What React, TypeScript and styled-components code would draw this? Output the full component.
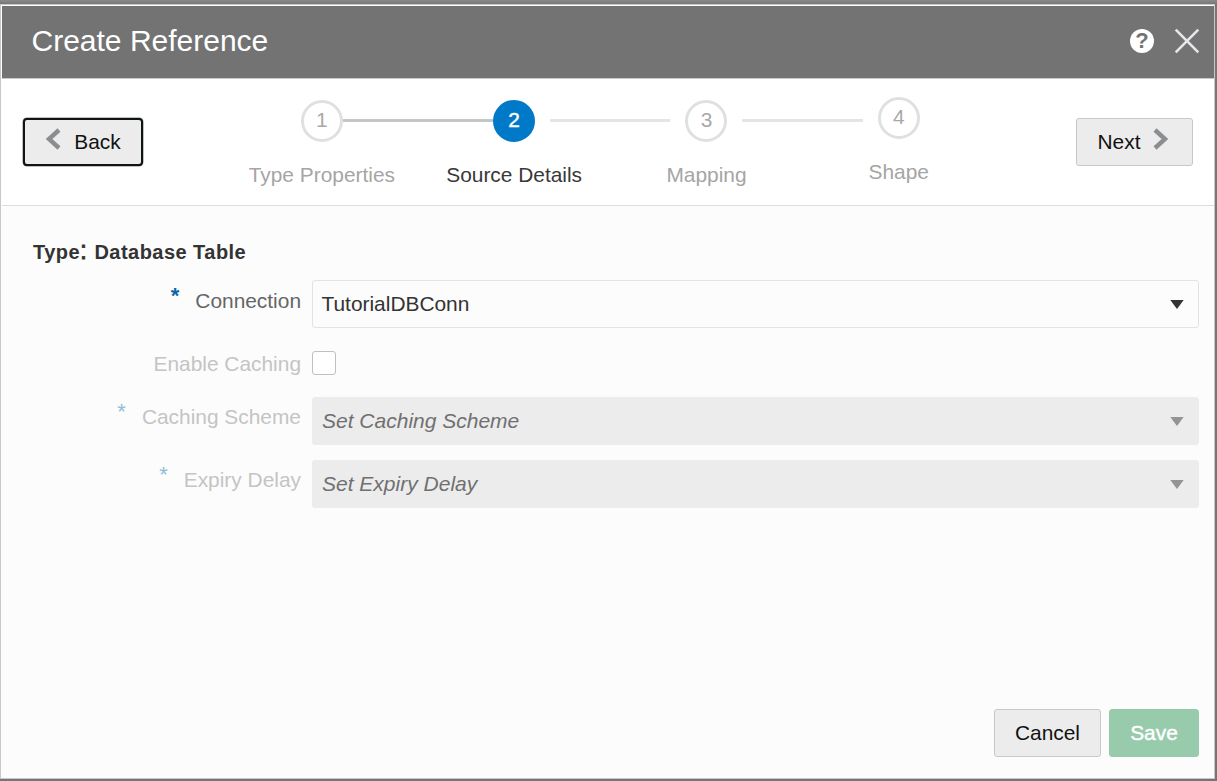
import React from "react";
import styled, { createGlobalStyle, css } from "styled-components";

const GlobalStyle = createGlobalStyle`
  * { box-sizing: border-box; }
  body {
    margin: 0;
    background: #757575;
    font-family: "Liberation Sans", Arial, sans-serif;
    font-size: 20.9px;
    line-height: 24px;
    color: #333;
  }
`;

const Backdrop = styled.div`
  width: 1217px;
  height: 781px;
  padding: 4px 2px 2px 0;
  overflow: hidden;
  background: linear-gradient(#8a8a8a 0, #777 4px, #757575 100%);
`;

const Dialog = styled.section`
  width: 1215px;
  height: 775px;
  display: flex;
  flex-direction: column;
  border: 1px solid #c8c8c8;
  background: #fcfcfc;
`;

const Header = styled.header`
  height: 74px;
  flex: none;
  display: flex;
  align-items: center;
  padding: 0 14px 2px 29.5px;
  background: #737373;
  border: solid #fff;
  border-width: 1px 0 0 1px;
  border-bottom: 1px solid #c8cacb;
`;

const Title = styled.h1`
  margin: 0;
  flex: 1;
  font-size: 30px;
  line-height: 36px;
  font-weight: 400;
  color: #fff;
`;

const CloseIcon = styled.svg`
  width: 26px;
  height: 26px;
  margin-left: 20px;
  display: block;
`;

const HelpBadge = styled.span`
  width: 24px;
  height: 24px;
  display: grid;
  place-items: center;
  border-radius: 50%;
  background: #fff;
  color: #737373;
  font: 700 22px/24px "Liberation Sans", Arial, sans-serif;
`;

const TrainBar = styled.nav`
  height: 127px;
  flex: none;
  display: flex;
  justify-content: space-between;
  align-items: flex-start;
  margin-left: 1px;
  padding: 0 21px;
  background: #fff;
  border-bottom: 1px solid #d8dfe4;
`;

const Button = styled.button<{ $w: number; $kind?: "focus" | "primary" }>`
  width: ${(p) => p.$w}px;
  height: 48px;
  padding: 0;
  display: flex;
  align-items: center;
  justify-content: center;
  font: inherit;
  color: #111;
  background: #ececec;
  border: 1px solid #c6c8ca;
  border-radius: 3px;
  ${(p) =>
    p.$kind === "focus" &&
    css`
      border: 2px solid #101414;
      border-radius: 4px;
      box-shadow: 0 0 0 0.5px #7d857d;
    `}
  ${(p) =>
    p.$kind === "primary" &&
    css`
      color: #fff;
      background: #98cbac;
      border-color: #98cbac;
      -webkit-text-stroke: 0.4px #fff;
    `}
`;

const NavSlot = styled.div`
  margin-top: 39px;
`;

const Chevron = styled.svg<{ $side: "left" | "right" }>`
  width: 16px;
  height: 22px;
  margin: ${(p) => (p.$side === "left" ? "-6px 13px 0 0" : "-6px 2px 0 13px")};
`;

const Steps = styled.ol`
  display: flex;
  margin: 21px 0 0 1.6px;
  padding: 0;
  list-style: none;
`;

const Step = styled.li`
  width: 192.3px;
  display: grid;
  grid-template-columns: 1fr 42px 1fr;
  align-items: start;
`;

const Rail = styled.span<{ $tone: "none" | "done" | "next"; $side: "before" | "after" }>`
  height: 3px;
  margin-top: 19px;
  ${(p) => p.$tone === "done" && "background: #c4c6c7;"}
  ${(p) =>
    p.$tone === "next" &&
    css`
      background: #e3e4e4;
      margin-${p.$side === "before" ? "right" : "left"}: 15px;
    `}
`;

const Circle = styled.span<{ $active?: boolean; $lift?: boolean }>`
  width: 42px;
  height: 42px;
  margin-top: ${(p) => (p.$lift ? -3 : 0)}px;
  display: grid;
  place-items: center;
  padding-bottom: 2px;
  border-radius: 50%;
  border: 3px solid ${(p) => (p.$active ? "#007ac8" : "#dfe1e1")};
  background: ${(p) => (p.$active ? "#007ac8" : "#fff")};
  color: ${(p) => (p.$active ? "#fff" : "#a8a8a8")};
  ${(p) => p.$active && "-webkit-text-stroke: 0.4px #fff;"}
`;

const StepLabel = styled.span<{ $active?: boolean; $lift?: boolean }>`
  grid-column: 1 / -1;
  margin-top: ${(p) => (p.$lift ? 18 : 21)}px;
  text-align: center;
  color: ${(p) => (p.$active ? "#383838" : "#a5a5a5")};
`;

const Body = styled.main`
  flex: 1;
  padding: 34px 15px 0 32px;
`;

const TypeHeading = styled.h2`
  margin: 0 0 16px;
  font-size: 20px;
  line-height: 24px;
  font-weight: 700;
  letter-spacing: 0.46px;
  color: #333;
`;

const Colon = styled.span`
  display: inline-block;
  margin-right: 1px;
  font-size: 25px;
  line-height: 20px;
  font-weight: 400;
  -webkit-text-stroke: 0.8px #333;
`;

const Field = styled.div<{ $gap: number }>`
  display: grid;
  grid-template-columns: 268px 887px;
  column-gap: 11px;
  align-items: start;
  margin-bottom: ${(p) => p.$gap}px;
`;

const Label = styled.label<{ $off?: boolean; $top: number }>`
  display: flex;
  justify-content: flex-end;
  gap: 16px;
  padding-top: ${(p) => p.$top}px;
  white-space: nowrap;
  color: ${(p) => (p.$off ? "#c4c4c4" : "#666")};
`;

const Star = styled.span<{ $off?: boolean }>`
  font-size: 22px;
  line-height: 14px;
  font-weight: ${(p) => (p.$off ? 400 : 700)};
  color: ${(p) => (p.$off ? "#92bcd8" : "#0b67a5")};
`;

const Select = styled.div<{ $off?: boolean }>`
  height: 48px;
  display: flex;
  align-items: center;
  justify-content: space-between;
  padding: 0 14.5px 0 ${(p) => (p.$off ? 9 : 8.5)}px;
  border: 1px solid ${(p) => (p.$off ? "#ececec" : "#e2e3e4")};
  border-radius: 3px;
  background: ${(p) => (p.$off ? "#ececec" : "#fcfcfc")};
  color: ${(p) => (p.$off ? "#707070" : "#333")};
  font-size: ${(p) => (p.$off ? 21 : 20.9)}px;
  font-style: ${(p) => (p.$off ? "italic" : "normal")};
`;

const Caret = styled.svg<{ $off?: boolean }>`
  width: 14px;
  height: 9px;
  margin-top: 1px;
  fill: ${(p) => (p.$off ? "#949494" : "#333")};
`;

const CheckBox = styled.span`
  width: 24px;
  height: 24px;
  border: 1.5px solid #c0c0c0;
  border-radius: 3px;
  background: #fff;
`;

const Footer = styled.footer`
  height: 69px;
  flex: none;
  display: flex;
  justify-content: flex-end;
  gap: 8px;
  padding-right: 15px;
`;

type Tone = "none" | "done" | "next";
const steps: { name: string; before: Tone; after: Tone; active?: boolean; lift?: boolean }[] = [
  { name: "Type Properties", before: "none", after: "done" },
  { name: "Source Details", before: "done", after: "next", active: true },
  { name: "Mapping", before: "next", after: "next" },
  { name: "Shape", before: "next", after: "none", lift: true },
];

const Arrow = ({ side }: { side: "left" | "right" }) => (
  <Chevron $side={side} viewBox="0 0 16 22">
    <path
      d={side === "left" ? "M14 2 L4 11 L14 20" : "M2 2 L12 11 L2 20"}
      fill="none"
      stroke="#8b8e90"
      strokeWidth="4.4"
    />
  </Chevron>
);

const Dropdown = ({ text, off }: { text: string; off?: boolean }) => (
  <Select $off={off}>
    <span>{text}</span>
    <Caret $off={off} viewBox="0 0 14 9">
      <path d="M0.3 0H13.7L7 9Z" />
    </Caret>
  </Select>
);

export default function App() {
  return (
    <>
      <GlobalStyle />
      <Backdrop>
        <Dialog>
          <Header>
            <Title>Create Reference</Title>
            <HelpBadge>?</HelpBadge>
            <CloseIcon viewBox="0 0 26 26">
              <path d="M1.7 1.7 L24.3 24.3 M24.3 1.7 L1.7 24.3" stroke="#e6e7ea" strokeWidth="2.6" />
            </CloseIcon>
          </Header>
          <TrainBar>
            <NavSlot>
              <Button $w={120} $kind="focus">
                <Arrow side="left" />
                Back
              </Button>
            </NavSlot>
            <Steps>
              {steps.map((s, i) => (
                <Step key={s.name}>
                  <Rail $tone={s.before} $side="before" />
                  <Circle $active={s.active} $lift={s.lift}>{i + 1}</Circle>
                  <Rail $tone={s.after} $side="after" />
                  <StepLabel $active={s.active} $lift={s.lift}>{s.name}</StepLabel>
                </Step>
              ))}
            </Steps>
            <NavSlot>
              <Button $w={117}>
                Next
                <Arrow side="right" />
              </Button>
            </NavSlot>
          </TrainBar>
          <Body>
            <TypeHeading>
              Type<Colon>:</Colon> Database Table
            </TypeHeading>
            <Field $gap={23}>
              <Label $top={9}>
                <Star>*</Star>Connection
              </Label>
              <Dropdown text="TutorialDBConn" />
            </Field>
            <Field $gap={21}>
              <Label $off $top={1}>Enable Caching</Label>
              <CheckBox />
            </Field>
            <Field $gap={15}>
              <Label $off $top={8}>
                <Star $off>*</Star>Caching Scheme
              </Label>
              <Dropdown text="Set Caching Scheme" off />
            </Field>
            <Field $gap={0}>
              <Label $off $top={8}>
                <Star $off>*</Star>Expiry Delay
              </Label>
              <Dropdown text="Set Expiry Delay" off />
            </Field>
          </Body>
          <Footer>
            <Button $w={107}>Cancel</Button>
            <Button $w={90} $kind="primary">Save</Button>
          </Footer>
        </Dialog>
      </Backdrop>
    </>
  );
}
